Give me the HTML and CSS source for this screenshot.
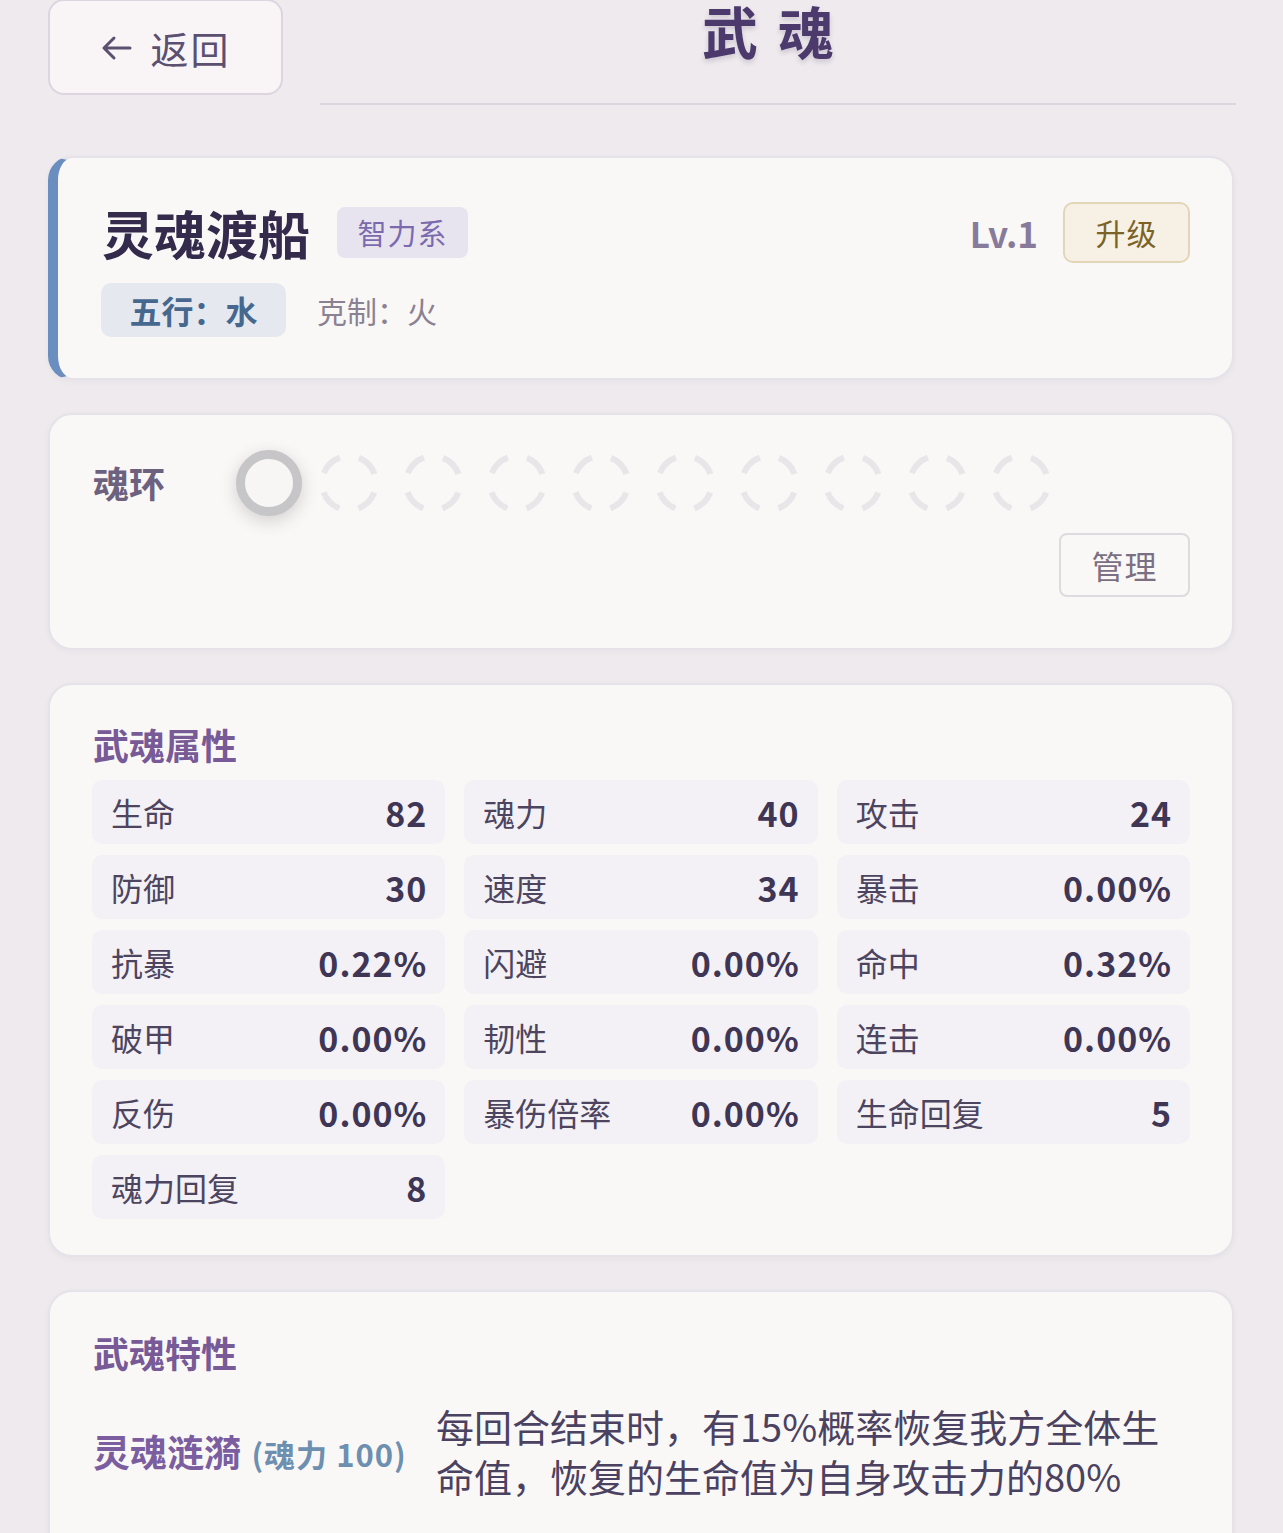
FILE: index.html
```html
<!DOCTYPE html>
<html lang="zh-CN">

<head>
  <meta charset="UTF-8">
  <meta name="viewport" content="width=device-width, initial-scale=1.0">
  <title>武魂</title>
  <link rel="stylesheet" href="styles.css">
</head>

<body>
  <div class="page">
    <header class="top_bar">
      <a href="javascript:;" class="back_btn">
        <svg class="back_icon" width="32" height="26" viewBox="0 0 32 26">
          <path d="M30 13H4M14 3L4 13L14 23" fill="none" stroke="#5b5070" stroke-width="3" stroke-linecap="round" stroke-linejoin="round" />
        </svg>
        <span>返回</span>
      </a>
      <div class="title_box">
        <h1>武魂</h1>
      </div>
    </header>

    <!-- 武魂基本信息 -->
    <section class="card soul_info">
      <div class="info_row">
        <div class="name_wrap">
          <h2 class="soul_name">灵魂渡船</h2>
          <span class="type_tag">智力系</span>
        </div>
        <div class="level_wrap">
          <span class="level">Lv.1</span>
          <a href="javascript:;" class="upgrade_btn">升级</a>
        </div>
      </div>
      <div class="element_row">
        <span class="element_tag">五行：水</span>
        <span class="restrain">克制：火</span>
      </div>
    </section>

    <!-- 魂环 -->
    <section class="card ring_card">
      <div class="ring_row">
        <span class="ring_label">魂环</span>
        <div class="ring_list">
          <span class="ring ring_active"></span>
          <svg class="ring_empty" viewBox="0 0 60 60"><circle cx="30" cy="30" r="27" /></svg>
          <svg class="ring_empty" viewBox="0 0 60 60"><circle cx="30" cy="30" r="27" /></svg>
          <svg class="ring_empty" viewBox="0 0 60 60"><circle cx="30" cy="30" r="27" /></svg>
          <svg class="ring_empty" viewBox="0 0 60 60"><circle cx="30" cy="30" r="27" /></svg>
          <svg class="ring_empty" viewBox="0 0 60 60"><circle cx="30" cy="30" r="27" /></svg>
          <svg class="ring_empty" viewBox="0 0 60 60"><circle cx="30" cy="30" r="27" /></svg>
          <svg class="ring_empty" viewBox="0 0 60 60"><circle cx="30" cy="30" r="27" /></svg>
          <svg class="ring_empty" viewBox="0 0 60 60"><circle cx="30" cy="30" r="27" /></svg>
          <svg class="ring_empty" viewBox="0 0 60 60"><circle cx="30" cy="30" r="27" /></svg>
        </div>
      </div>
      <div class="manage_row">
        <a href="javascript:;" class="manage_btn">管理</a>
      </div>
    </section>

    <!-- 武魂属性 -->
    <section class="card">
      <h3 class="card_title">武魂属性</h3>
      <ul class="stat_grid">
        <li><span>生命</span><b>82</b></li>
        <li><span>魂力</span><b>40</b></li>
        <li><span>攻击</span><b>24</b></li>
        <li><span>防御</span><b>30</b></li>
        <li><span>速度</span><b>34</b></li>
        <li><span>暴击</span><b>0.00%</b></li>
        <li><span>抗暴</span><b>0.22%</b></li>
        <li><span>闪避</span><b>0.00%</b></li>
        <li><span>命中</span><b>0.32%</b></li>
        <li><span>破甲</span><b>0.00%</b></li>
        <li><span>韧性</span><b>0.00%</b></li>
        <li><span>连击</span><b>0.00%</b></li>
        <li><span>反伤</span><b>0.00%</b></li>
        <li><span>暴伤倍率</span><b>0.00%</b></li>
        <li><span>生命回复</span><b>5</b></li>
        <li><span>魂力回复</span><b>8</b></li>
      </ul>
    </section>

    <!-- 武魂特性 -->
    <section class="card trait_card">
      <h3 class="card_title">武魂特性</h3>
      <div class="trait_row">
        <div class="trait_name">灵魂涟漪 <small>(魂力 100)</small></div>
        <p class="trait_desc">每回合结束时，有15%概率恢复我方全体生命值，恢复的生命值为自身攻击力的80%</p>
      </div>
    </section>
  </div>
</body>

</html>
```

FILE: styles.css
```css
* {
  margin: 0;
  padding: 0;
  box-sizing: border-box;
}

body {
  background-color: #eeeaed;
  font-family: "Noto Sans CJK SC", "Noto Sans", sans-serif;
  color: #4a4260;
}

a {
  text-decoration: none;
}

ul {
  list-style: none;
}

.page {
  padding: 0 49px 0 48px;
}

/* 顶部 */
.top_bar {
  display: flex;
  align-items: flex-start;
}

.back_btn {
  display: flex;
  align-items: center;
  justify-content: center;
  gap: 18px;
  width: 235px;
  height: 96px;
  margin-top: -1px;
  border: 2px solid #dcd5e0;
  border-radius: 16px;
  background-color: #f9f5f7;
  color: #5b5070;
  font-size: 38px;
  letter-spacing: 2px;
}

.back_icon {
  margin-top: 2px;
}

.title_box {
  flex: 1;
  height: 105px;
  margin-left: 37px;
  margin-right: -2px;
  border-bottom: 2px solid #dcd6e0;
  text-align: center;
}

.title_box h1 {
  padding-top: 1px;
  font-size: 56px;
  line-height: 58px;
  font-weight: 700;
  letter-spacing: 20px;
  color: #4b3a6b;
  text-shadow: 0 3px 5px rgba(60, 40, 90, 0.18);
}

/* 卡片 */
.card {
  margin-top: 33px;
  background-color: #faf8f6;
  border: 2px solid #e6e2e9;
  border-radius: 24px;
  box-shadow: 0 2px 6px rgba(80, 60, 100, 0.04);
}

.soul_info {
  margin-top: 51px;
  height: 224px;
  padding: 49px 42px 0 46px;
  border-left: 10px solid #6a8ec0;
}

.info_row {
  display: flex;
  justify-content: space-between;
  align-items: center;
  height: 51px;
}

.name_wrap {
  display: flex;
  align-items: center;
  gap: 27px;
}

.soul_name {
  font-size: 52px;
  font-weight: 700;
  color: #342a4c;
  line-height: 1;
  margin-left: -2px;
}

.type_tag {
  display: inline-block;
  width: 131px;
  height: 51px;
  line-height: 51px;
  text-align: center;
  background-color: #e8e4ef;
  color: #7b6aae;
  font-size: 29px;
  border-radius: 8px;
  letter-spacing: 1px;
}

.level_wrap {
  display: flex;
  align-items: center;
  gap: 25px;
}

.level {
  font-size: 35px;
  font-weight: 700;
  color: #877b9b;
}

.upgrade_btn {
  width: 127px;
  height: 61px;
  line-height: 57px;
  text-align: center;
  background-color: #f7f0e4;
  border: 2px solid #e2d6b9;
  border-radius: 10px;
  color: #7b6327;
  font-size: 30px;
  letter-spacing: 1px;
}

.element_row {
  display: flex;
  align-items: center;
  gap: 31px;
  margin-top: 25px;
  margin-left: -3px;
}

.element_tag {
  width: 185px;
  height: 54px;
  line-height: 54px;
  text-align: center;
  background-color: #e5e8ee;
  color: #46688f;
  font-size: 32px;
  font-weight: 700;
  border-radius: 10px;
}

.restrain {
  font-size: 30px;
  color: #8a8292;
}

/* 魂环 */
.ring_card {
  height: 237px;
  padding: 35px 42px 0 43px;
}

.ring_row {
  display: flex;
  align-items: center;
}

.ring_label {
  width: 143px;
  font-size: 36px;
  font-weight: 700;
  color: #6c6280;
  margin-top: -2px;
}

.ring_list {
  display: flex;
  align-items: center;
  gap: 24px;
}

.ring {
  display: block;
  width: 66px;
  height: 66px;
  border-radius: 50%;
}

.ring_active {
  margin-right: -7px;
  border: 9px solid #c6c5c8;
  background-color: #f8f6f5;
  box-shadow: 0 5px 18px rgba(0, 0, 0, 0.16);
}

.ring_empty {
  width: 60px;
  height: 60px;
}

.ring_empty circle {
  fill: none;
  stroke: #e9e6ea;
  stroke-width: 6;
  stroke-dasharray: 23 19.4;
  stroke-dashoffset: -9.7;
}

.manage_row {
  display: flex;
  justify-content: flex-end;
  margin-top: 17px;
}

.manage_btn {
  width: 131px;
  height: 64px;
  line-height: 60px;
  text-align: center;
  border: 2px solid #dedadf;
  border-radius: 8px;
  color: #7a7082;
  font-size: 32px;
  letter-spacing: 1px;
}

/* 属性 */
.card_title {
  padding: 34px 0 0 43px;
  font-size: 36px;
  line-height: 50px;
  font-weight: 700;
  color: #775a96;
}

.stat_grid {
  display: grid;
  grid-template-columns: repeat(3, 1fr);
  gap: 11px 19px;
  padding: 11px 42px 36px 42px;
}

.stat_grid li {
  display: flex;
  justify-content: space-between;
  align-items: center;
  height: 64px;
  padding: 0 18px 0 19px;
  background-color: #f3f1f5;
  border-radius: 10px;
}

.stat_grid span {
  font-size: 32px;
  color: #4d4560;
}

.stat_grid b {
  font-size: 34px;
  font-weight: 600;
  color: #3e3654;
  letter-spacing: 1px;
}

/* 特性 */
.trait_card {
  height: 260px;
  border-bottom: none;
  border-radius: 24px 24px 0 0;
}

.trait_card .card_title {
  padding-top: 35px;
}

.trait_row {
  display: flex;
  align-items: center;
  margin-top: 24px;
  padding: 0 42px 0 43px;
}

.trait_name {
  width: 343px;
  flex-shrink: 0;
  font-size: 37px;
  font-weight: 700;
  color: #7a5ea0;
}

.trait_name small {
  margin-left: 2px;
  font-size: 31px;
  letter-spacing: 1px;
  color: #6d8fb0;
}

.trait_desc {
  font-size: 38px;
  line-height: 50px;
  color: #4a4260;
}
```
